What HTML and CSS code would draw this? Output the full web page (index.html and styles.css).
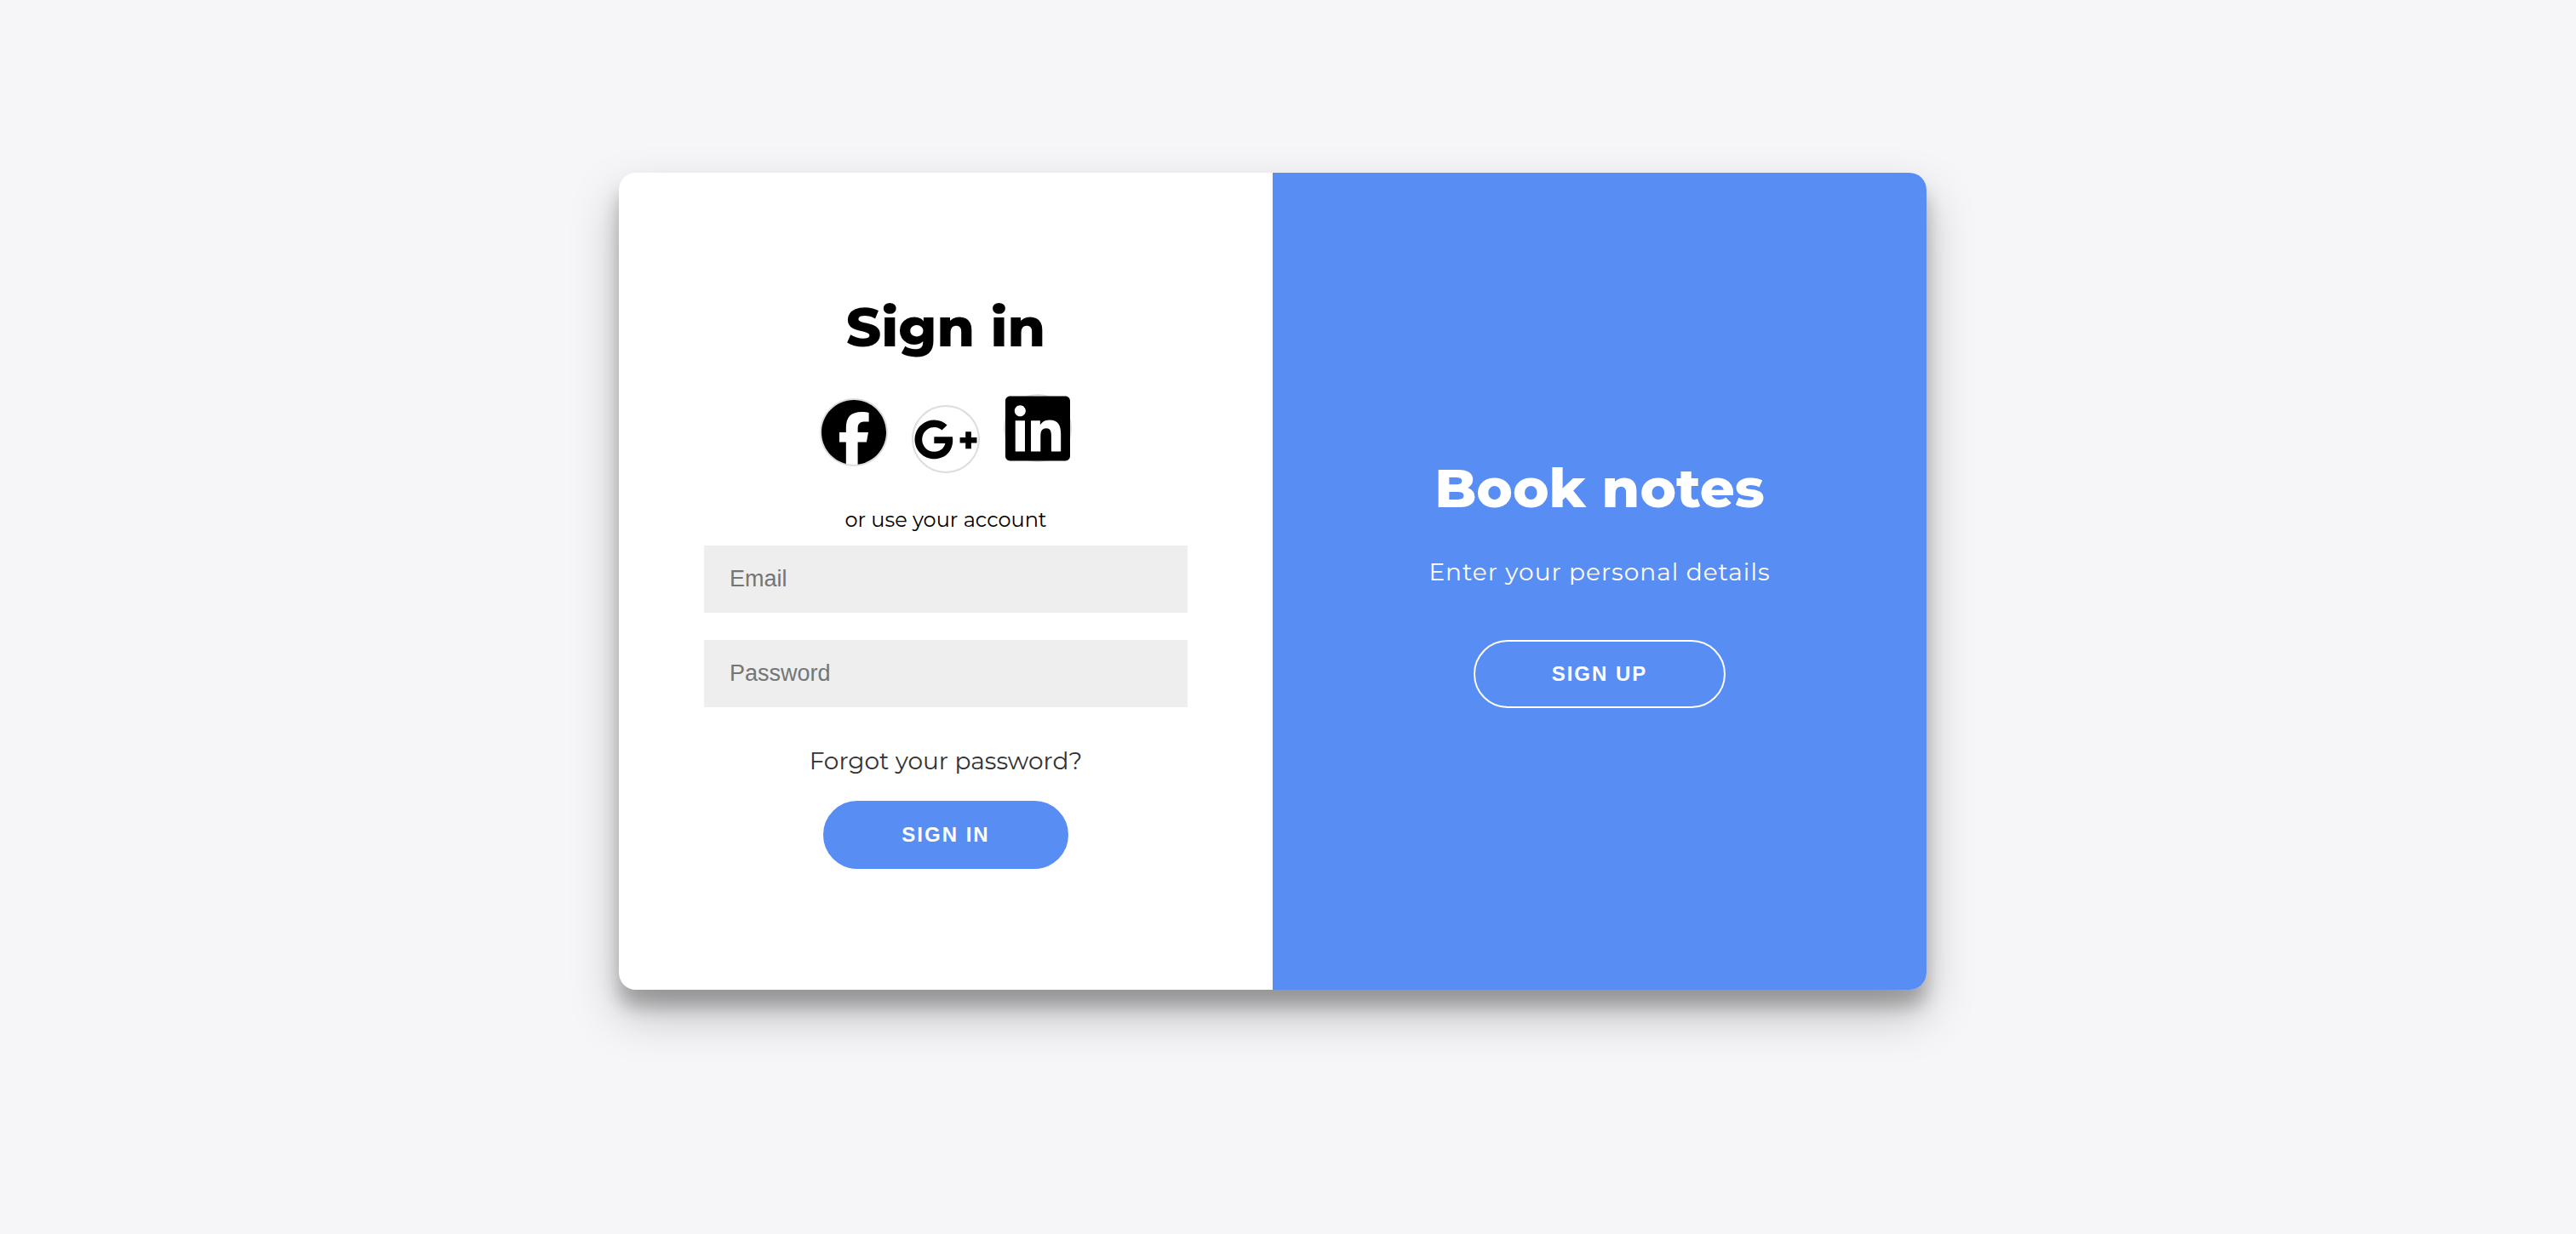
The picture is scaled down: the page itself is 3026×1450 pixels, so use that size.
FILE: index.html
```html
<!DOCTYPE html>
<html lang="en">
<head>
<meta charset="utf-8">
<meta name="viewport" content="width=device-width, initial-scale=1">
<title>Book notes – Sign in</title>
<link rel="stylesheet" href="styles.css">
</head>
<body>
<main class="card">
  <form class="panel sign-in">
    <h1 class="title">Sign in</h1>
    <div class="social">
      <a class="social-link" href="#" aria-label="Facebook">
        <svg class="social-icon" viewBox="0 0 512 512" aria-hidden="true"><path d="M512 256C512 114.6 397.4 0 256 0S0 114.6 0 256C0 376 82.7 476.8 194.2 504.5V334.2H141.4V256h52.8V222.3c0-87.1 39.4-127.5 125-127.5c16.2 0 44.2 3.2 55.7 6.4V172c-6-.6-16.5-1-29.6-1c-42 0-58.2 15.9-58.2 57.2V256h83.6l-14.4 78.2H287V510.1C413.8 494.8 512 386.9 512 256z"/></svg>
      </a>
      <a class="social-link" href="#" aria-label="Google Plus">
        <svg class="social-icon" viewBox="0 0 640 512" aria-hidden="true"><path d="M386.061 228.496c1.834 9.692 3.143 19.384 3.143 31.956C389.204 370.205 315.599 448 204.8 448c-106.084 0-192-85.915-192-192s85.916-192 192-192c51.864 0 95.083 18.859 128.611 50.292l-52.126 50.03c-14.145-13.621-39.028-29.599-76.485-29.599-65.484 0-118.92 54.221-118.92 121.277 0 67.056 53.436 121.277 118.92 121.277 75.961 0 104.513-54.745 108.965-82.773H204.8v-66.009h181.261zm185.406 6.437V179.2h-56.001v55.733h-55.733v56.001h55.733v55.733h56.001v-55.733H627.2v-56.001h-55.733z"/></svg>
      </a>
      <a class="social-link" href="#" aria-label="LinkedIn">
        <svg class="social-icon" viewBox="0 0 448 512" aria-hidden="true"><path d="M416 32H31.9C14.3 32 0 46.5 0 64.3v383.4C0 465.5 14.3 480 31.9 480H416c17.6 0 32-14.5 32-32.3V64.3c0-17.8-14.4-32.3-32-32.3zM135.4 416H69V202.2h66.5V416zm-33.2-243c-21.3 0-38.5-17.3-38.5-38.5S80.9 96 102.2 96c21.2 0 38.5 17.3 38.5 38.5 0 21.3-17.2 38.5-38.5 38.5zm282.1 243h-66.4V312c0-24.8-.5-56.7-34.5-56.7-34.6 0-39.9 27-39.9 54.9V416h-66.4V202.2h63.7v29.2h.9c8.9-16.8 30.6-34.5 62.9-34.5 67.2 0 79.7 44.3 79.7 101.9V416z"/></svg>
      </a>
    </div>
    <p class="hint">or use your account</p>
    <div class="fields">
      <input class="field" type="email" placeholder="Email" aria-label="Email">
      <input class="field" type="password" placeholder="Password" aria-label="Password">
    </div>
    <a class="forgot" href="#">Forgot your password?</a>
    <button class="button" type="submit">Sign In</button>
  </form>
  <section class="panel welcome">
    <h1 class="title">Book notes</h1>
    <p class="lead">Enter your personal details</p>
    <button class="button button-ghost" type="button">Sign Up</button>
  </section>
</main>
</body>
</html>
```
FILE: styles.css
```css
* {
  box-sizing: border-box;
}

body {
  display: flex;
  align-items: center;
  justify-content: center;
  min-height: 100vh;
  margin: 0;
  padding: 0 36px 84px 0;
  background: #f6f5f7;
  color: #000;
  font-family: Montserrat, Inter, sans-serif;
}

.card {
  display: grid;
  grid-template-columns: 1fr 1fr;
  width: 100%;
  max-width: 1536px;
  min-height: 960px;
  overflow: hidden;
  border-radius: 20px;
  background: #fff;
  box-shadow: 0 28px 56px rgba(0, 0, 0, 0.25), 0 20px 20px rgba(0, 0, 0, 0.22);
}

.panel {
  display: flex;
  flex-direction: column;
  align-items: center;
  justify-content: center;
  padding: 0 100px;
  text-align: center;
}

.welcome {
  padding: 0 80px;
  background: #588df4;
  color: #fff;
}

.title {
  margin: 0;
  font-size: 64px;
  font-weight: 800;
  line-height: 78px;
}

.social {
  display: flex;
  align-items: baseline;
  gap: 28px;
  margin: 40px 0;
}

.social-link {
  display: inline-flex;
  align-items: center;
  justify-content: center;
  width: 80px;
  height: 80px;
  border: 2px solid #ddd;
  border-radius: 50%;
  color: #000;
}

.social-icon {
  flex: none;
  width: 76px;
  fill: currentColor;
}

.hint {
  margin: 0 0 15px;
  font-size: 24px;
  line-height: 30px;
}

.fields {
  display: grid;
  gap: 32px;
  width: 100%;
}

.field {
  width: 100%;
  height: 79px;
  padding: 0 30px;
  border: 0;
  background: #eee;
  font-family: "Liberation Sans", Arial, sans-serif;
  font-size: 27px;
}

.field::placeholder {
  color: #757575;
}

.forgot {
  margin: 45px 0 29px;
  color: #333;
  font-size: 28px;
  line-height: 36px;
  text-decoration: none;
}

.lead {
  margin: 42px 0 62px;
  font-size: 28px;
  letter-spacing: 1px;
  line-height: 36px;
}

.button {
  height: 80px;
  padding: 0 90px;
  border: 2px solid #588df4;
  border-radius: 40px;
  background: #588df4;
  color: #fff;
  font-family: "Liberation Sans", Arial, sans-serif;
  font-size: 24px;
  font-weight: 700;
  letter-spacing: 2px;
  text-transform: uppercase;
}

.button-ghost {
  border-color: #fff;
  background: transparent;
}
```
